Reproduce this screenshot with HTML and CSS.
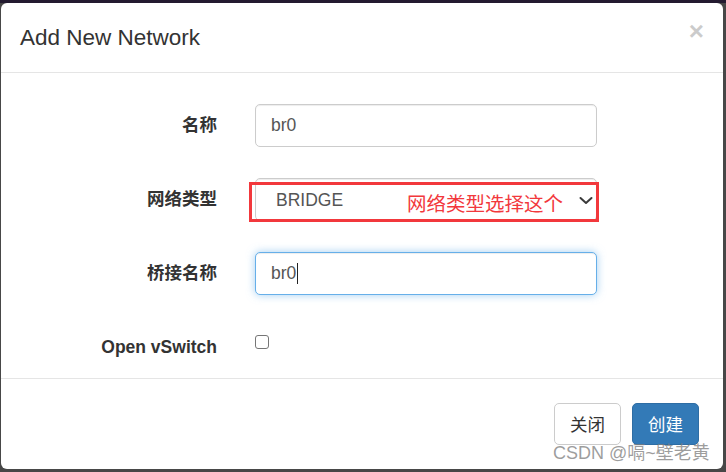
FILE: index.html
```html
<!DOCTYPE html>
<html lang="zh-CN">
<head>
<meta charset="utf-8">
<title>Add New Network</title>
<link rel="stylesheet" href="styles.css">
</head>
<body>
<div class="modal">
  <div class="modal-header">
    <h4 class="modal-title">Add New Network</h4>
    <button class="close" type="button">×</button>
  </div>
  <form class="modal-body">
    <label class="ctl-label">名称</label>
    <input class="form-control" type="text" value="br0">

    <label class="ctl-label">网络类型</label>
    <div class="select-wrap">
      <select class="form-control select"><option>BRIDGE</option></select>
      <svg class="chevron" width="14" height="9" viewBox="0 0 14 9"><path d="M1.5 2 L7 7 L12.5 2" fill="none" stroke="#3a3a3a" stroke-width="2" stroke-linecap="round" stroke-linejoin="round"/></svg>
      <div class="annot"><span class="annot-text">网络类型选择这个</span></div>
    </div>

    <label class="ctl-label">桥接名称</label>
    <div class="form-control focused"><span>br0</span><span class="caret"></span></div>

    <label class="ctl-label">Open vSwitch</label>
    <div class="check-cell"><input class="check" type="checkbox"></div>
  </form>
  <div class="modal-footer">
    <button class="btn btn-default" type="button">关闭</button>
    <button class="btn btn-primary" type="button">创建</button>
  </div>
</div>
<div class="watermark">CSDN @嗝~壁老黄</div>
</body>
</html>
```

FILE: styles.css
```css
* { box-sizing: border-box; }

html, body { margin: 0; padding: 0; }

body {
  width: 726px;
  height: 472px;
  overflow: hidden;
  background: linear-gradient(to bottom, #231a30 0, #231a30 3px, #474747 3px, #474747 100%);
  font-family: "Liberation Sans", Arial, "Noto Sans CJK SC", sans-serif;
  color: #333;
  position: relative;
}

.modal {
  margin: 3px 0 0 1px;
  width: 722px;
  height: 466px;
  background: #fff;
  border-radius: 6px;
  display: flex;
  flex-direction: column;
}

.modal-header {
  height: 70px;
  border-bottom: 1px solid #e5e5e5;
  padding: 0 19px;
  display: flex;
  align-items: center;
  justify-content: space-between;
}

.modal-title {
  margin: 0;
  font-size: 22.5px;
  font-weight: normal;
  line-height: 32px;
  color: #333;
}

.close {
  border: 0;
  background: transparent;
  padding: 0;
  font-family: "Liberation Sans", Arial, sans-serif;
  font-size: 26px;
  font-weight: bold;
  line-height: 1;
  color: #000;
  opacity: 0.2;
  margin-top: -14px;
}

.modal-body {
  height: 305px;
  margin: 0;
  padding: 31px 0 9px 24px;
  display: grid;
  grid-template-columns: 192px 342px;
  grid-auto-rows: 43px;
  column-gap: 38px;
  row-gap: 31px;
}

.ctl-label {
  text-align: right;
  font-weight: bold;
  font-size: 17.5px;
  line-height: 25px;
  padding-top: 9px;
  font-family: "Liberation Sans", Arial, "Noto Sans CJK SC", sans-serif;
  color: #333;
}

.form-control {
  width: 342px;
  height: 43px;
  border: 1px solid #ccc;
  border-radius: 5px;
  padding: 0 15px;
  font-family: "Liberation Sans", Arial, sans-serif;
  font-size: 17.5px;
  color: #555;
  background: #fff;
  box-shadow: inset 0 1px 1px rgba(0, 0, 0, 0.075);
  outline: none;
}

.select-wrap {
  position: relative;
  width: 342px;
  height: 43px;
}

.select {
  appearance: none;
  -webkit-appearance: none;
  padding-left: 20px;
}

.chevron {
  position: absolute;
  left: 324px;
  top: 18px;
}

.annot {
  position: absolute;
  left: -6px;
  top: 4px;
  width: 350px;
  height: 40px;
  border: 3px solid #f2383c;
  display: flex;
  align-items: center;
  padding-left: 155px;
}

.annot-text {
  font-family: "Noto Sans CJK SC", sans-serif;
  font-size: 19.5px;
  line-height: 24px;
  color: #f2383c;
  margin-top: 1px;
}

.focused {
  display: flex;
  align-items: center;
  border-color: #66afe9;
  box-shadow: inset 0 1px 1px rgba(0, 0, 0, 0.075), 0 0 8px rgba(102, 175, 233, 0.6);
}

.caret {
  display: inline-block;
  width: 1px;
  height: 21px;
  background: #222;
  margin-left: 1px;
}

.check-cell {
  padding-top: 9px;
}

.check {
  margin: 0;
  width: 14px;
  height: 14px;
  appearance: none;
  -webkit-appearance: none;
  border: 1px solid #767676;
  border-radius: 3px;
  background: #fff;
  display: block;
}

.modal-footer {
  flex: 1;
  border-top: 1px solid #e5e5e5;
  padding: 24px 24px 0 0;
  display: flex;
  justify-content: flex-end;
  align-items: flex-start;
  gap: 11px;
}

.btn {
  height: 42px;
  padding: 0 15px;
  border: 1px solid #ccc;
  border-radius: 5px;
  font-family: "Noto Sans CJK SC", sans-serif;
  font-size: 17.5px;
  line-height: 24px;
  background: #fff;
  color: #333;
}

.btn-primary {
  background: #337ab7;
  border-color: #2e6da4;
  color: #fff;
}

.watermark {
  position: absolute;
  left: 553px;
  top: 442px;
  font-family: "Liberation Sans", Arial, "Noto Sans CJK SC", sans-serif;
  font-size: 18px;
  line-height: 22px;
  color: rgba(125, 125, 125, 0.75);
  white-space: nowrap;
}
```
